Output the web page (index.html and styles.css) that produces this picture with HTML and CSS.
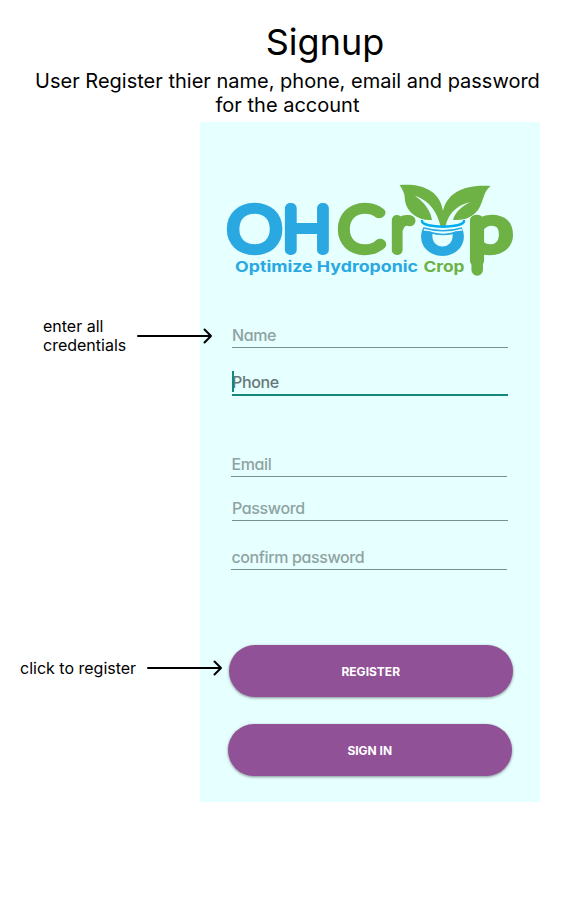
FILE: index.html
```html
<!DOCTYPE html>
<html lang="en">
<head>
<meta charset="utf-8">
<title>Signup</title>
<link rel="stylesheet" href="styles.css">
</head>
<body>
<header class="intro">
  <h1>Signup</h1>
  <p>User Register thier name, phone, email and password<br>for the account</p>
</header>
<main class="board">
  <aside class="notes">
    <div class="note note-fields">
      <span>enter all<br>credentials</span>
      <svg class="arrow" width="78" height="18" viewBox="0 0 78 18"><path d="M1 9H74M67.500 2.500L74 9L67.500 15.500"/></svg>
    </div>
    <div class="note note-register">
      <span>click to register</span>
      <svg class="arrow" width="78" height="18" viewBox="0 0 78 18"><path d="M1 9H74M67.500 2.500L74 9L67.500 15.500"/></svg>
    </div>
  </aside>
  <section class="phone">
    <svg class="logo" width="300" height="110" viewBox="220 175 300 110">
      <g class="wordmark">
        <text class="blue" transform="translate(228 250.200) scale(1.170 1.030)">O</text>
        <text class="blue" transform="translate(283 250.300) scale(1.100 1.020)">H</text>
        <text class="green" transform="translate(339 250.200) scale(1.120 1.030)">C</text>
        <text class="green" transform="translate(391.500 250.300) scale(1 1.020)">r</text>
        <text class="green" transform="translate(469.500 250) scale(1.320 1.030)">p</text>
      </g>
      <path class="stem" d="M477.200 258V270"/>
      <path class="fill-blue" d="M423.500 227C416 242 427 256 442.500 256S469 242 461.500 227L452.500 233C455 251 430 251 432.500 233Z"/>
      <path class="fill-green" d="M440.500 226C436 207 425 199 415 196C426 203 431 213 432 220C419 221 407 213 405 201C405 194 403 190 399.500 185C421 183 440 190 443 211C447 193 464 184 490.500 186C483 192 484 201 478 210C471 219 463 220 453 220C455 212 463 205 471 202C460 204 449 211 445.500 226Z"/>
      <path class="rim" d="M422 221C422 228.500 464 228.500 464 221"/>
      <path class="gap" d="M424 228.500Q443 232 462 228.500"/>
      <path class="ripple" d="M424 228Q443 233.500 462 228M429 232Q443 237 457 232"/>
      <text class="tag blue" x="235" y="272" textLength="183" lengthAdjust="spacingAndGlyphs">Optimize Hydroponic</text>
      <text class="tag green" x="423.500" y="272" textLength="41" lengthAdjust="spacingAndGlyphs">Crop</text>
    </svg>
    <form class="fields">
      <div class="field name">Name</div>
      <div class="field tel"><i class="caret"></i>Phone</div>
      <div class="field email">Email</div>
      <div class="field pass">Password</div>
      <div class="field confirm">confirm password</div>
      <button type="button" class="register">REGISTER</button>
      <button type="button" class="signin">SIGN IN</button>
    </form>
  </section>
</main>
</body>
</html>
```
FILE: styles.css
```css
* { box-sizing: border-box; }
body {
  margin: 0;
  min-height: 924px;
  background: #fff;
  color: #000;
  font-family: Inter, sans-serif;
}
.intro { height: 122px; padding-top: 20px; text-align: center; }
h1 {
  margin: 0 0 5px 76px;
  font-size: 36px;
  line-height: 44px;
  font-weight: 400;
}
.intro p { margin: 0 0 0 1px; font-size: 20px; line-height: 24px; }
.board { display: grid; grid-template-columns: 200px 340px; height: 680px; }
.notes { position: relative; z-index: 1; font-size: 16px; line-height: 19px; }
.note { display: flex; align-items: center; white-space: nowrap; height: 38px; }
.note-fields { margin: 195px 0 0 43px; }
.note-register { margin: 294px 0 0 20px; }
.note span { flex: none; }
.arrow { flex: none; margin-left: 10.500px; fill: none; stroke: #000; stroke-width: 2; stroke-linecap: round; stroke-linejoin: round; }
.phone { background: #e6ffff; padding-top: 53px; }
.logo { display: block; margin-left: 20px; }
.wordmark text {
  font-family: Lato, sans-serif;
  font-size: 58px;
  font-weight: 100;
  stroke-width: 10;
  stroke-linejoin: round;
}
.stem { stroke: #6eb144; stroke-width: 11.500; stroke-linecap: round; }
.blue { fill: #29a8e2; stroke: #29a8e2; }
.green { fill: #6eb144; stroke: #6eb144; }
.fill-blue { fill: #29a8e2; }
.fill-green { fill: #6eb144; }
.rim { fill: none; stroke: #00aeef; stroke-width: 2.500; stroke-linecap: round; }
.gap { fill: none; stroke: #e6ffff; stroke-width: 4; }
.ripple { fill: none; stroke: #29a8e2; stroke-width: 1.500; }
.tag { font-size: 15.200px; font-weight: 700; stroke: none; }
.fields { display: flex; flex-direction: column; padding-left: 32px; }
.field {
  position: relative;
  width: 276px;
  height: 26px;
  border-bottom: 1px solid #779093;
  color: #8fa3a2;
  font-size: 16px;
  line-height: 26px;
  font-weight: 500;
  font-feature-settings: "cv11";
  letter-spacing: -0.380px;
}
.name { margin-top: 37px; }
.tel { margin-top: 21px; height: 27px; border-bottom: 2px solid #16877b; color: #667777; }
.caret { position: absolute; left: 0; top: 2px; width: 2px; height: 21px; background: #16877b; }
.email { margin: 55px 0 0 -0.600px; }
.pass { margin-top: 18px; }
.confirm { margin: 23px 0 0 -0.600px; }
button {
  width: 283.500px;
  height: 52px;
  border: 0;
  border-radius: 26px;
  background: #915196;
  color: #fff;
  font: 700 12px Inter, sans-serif;
  box-shadow: 0 1px 3px rgba(0, 0, 0, 0.450);
}
.register { margin: 75px 0 0 -3px; }
.signin { margin: 27px 0 0 -4px; }
```
